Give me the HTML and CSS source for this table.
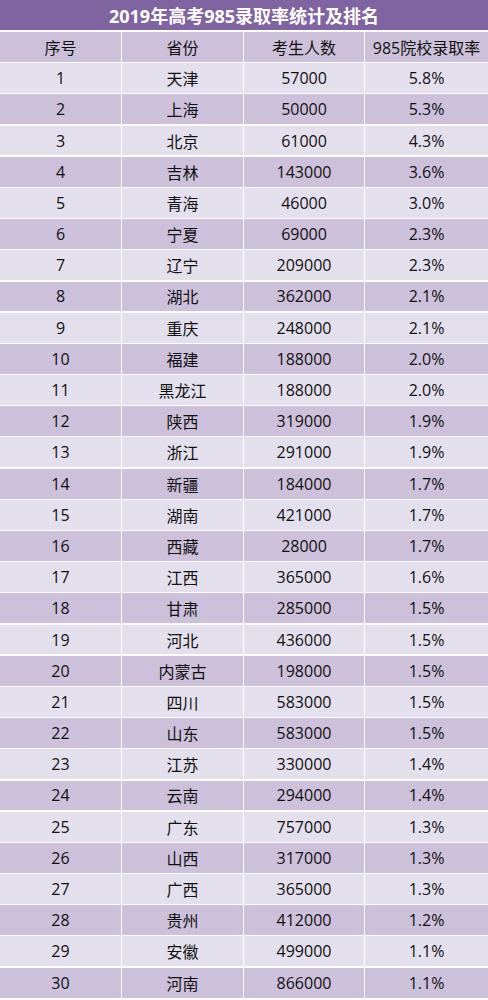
FILE: index.html
```html
<!DOCTYPE html>
<html lang="zh">
<head>
<meta charset="utf-8">
<link rel="stylesheet" href="styles.css">
</head>
<body>
<div class="sheet">
  <div class="title">2019年高考985录取率统计及排名</div>
  <div class="table">
    <div class="row head"><div>序号</div><div>省份</div><div>考生人数</div><div>985院校录取率</div></div>
    <div class="row"><div>1</div><div>天津</div><div>57000</div><div>5.8%</div></div>
    <div class="row"><div>2</div><div>上海</div><div>50000</div><div>5.3%</div></div>
    <div class="row"><div>3</div><div>北京</div><div>61000</div><div>4.3%</div></div>
    <div class="row"><div>4</div><div>吉林</div><div>143000</div><div>3.6%</div></div>
    <div class="row"><div>5</div><div>青海</div><div>46000</div><div>3.0%</div></div>
    <div class="row"><div>6</div><div>宁夏</div><div>69000</div><div>2.3%</div></div>
    <div class="row"><div>7</div><div>辽宁</div><div>209000</div><div>2.3%</div></div>
    <div class="row"><div>8</div><div>湖北</div><div>362000</div><div>2.1%</div></div>
    <div class="row"><div>9</div><div>重庆</div><div>248000</div><div>2.1%</div></div>
    <div class="row"><div>10</div><div>福建</div><div>188000</div><div>2.0%</div></div>
    <div class="row"><div>11</div><div>黑龙江</div><div>188000</div><div>2.0%</div></div>
    <div class="row"><div>12</div><div>陕西</div><div>319000</div><div>1.9%</div></div>
    <div class="row"><div>13</div><div>浙江</div><div>291000</div><div>1.9%</div></div>
    <div class="row"><div>14</div><div>新疆</div><div>184000</div><div>1.7%</div></div>
    <div class="row"><div>15</div><div>湖南</div><div>421000</div><div>1.7%</div></div>
    <div class="row"><div>16</div><div>西藏</div><div>28000</div><div>1.7%</div></div>
    <div class="row"><div>17</div><div>江西</div><div>365000</div><div>1.6%</div></div>
    <div class="row"><div>18</div><div>甘肃</div><div>285000</div><div>1.5%</div></div>
    <div class="row"><div>19</div><div>河北</div><div>436000</div><div>1.5%</div></div>
    <div class="row"><div>20</div><div>内蒙古</div><div>198000</div><div>1.5%</div></div>
    <div class="row"><div>21</div><div>四川</div><div>583000</div><div>1.5%</div></div>
    <div class="row"><div>22</div><div>山东</div><div>583000</div><div>1.5%</div></div>
    <div class="row"><div>23</div><div>江苏</div><div>330000</div><div>1.4%</div></div>
    <div class="row"><div>24</div><div>云南</div><div>294000</div><div>1.4%</div></div>
    <div class="row"><div>25</div><div>广东</div><div>757000</div><div>1.3%</div></div>
    <div class="row"><div>26</div><div>山西</div><div>317000</div><div>1.3%</div></div>
    <div class="row"><div>27</div><div>广西</div><div>365000</div><div>1.3%</div></div>
    <div class="row"><div>28</div><div>贵州</div><div>412000</div><div>1.2%</div></div>
    <div class="row"><div>29</div><div>安徽</div><div>499000</div><div>1.1%</div></div>
    <div class="row"><div>30</div><div>河南</div><div>866000</div><div>1.1%</div></div>
  </div>
</div>
</body>
</html>
```
FILE: styles.css
```css
html, body {
  margin: 0;
  padding: 0;
  background: #ffffff;
}
.sheet {
  width: 488px;
  font-family: "Open Sans", "Noto Sans CJK SC", sans-serif;
  color: #111111;
}
.title {
  height: 30px;
  background: #8064a2;
  color: #ffffff;
  font-weight: bold;
  font-size: 18px;
  display: flex;
  align-items: center;
  justify-content: center;
  margin-bottom: 2px;
}
.table {
  display: flex;
  flex-direction: column;
  gap: 1.3px;
}
.row {
  display: grid;
  grid-template-columns: 121px 121px 120px 123px;
  column-gap: 1px;
  height: 29.9px;
}
.row > div {
  display: flex;
  align-items: center;
  justify-content: center;
  font-size: 16px;
  background: #e4dfec;
}
.row:nth-child(odd) > div {
  background: #ccc0da;
}
.row.head > div {
  background: #ccc0da;
}
```
